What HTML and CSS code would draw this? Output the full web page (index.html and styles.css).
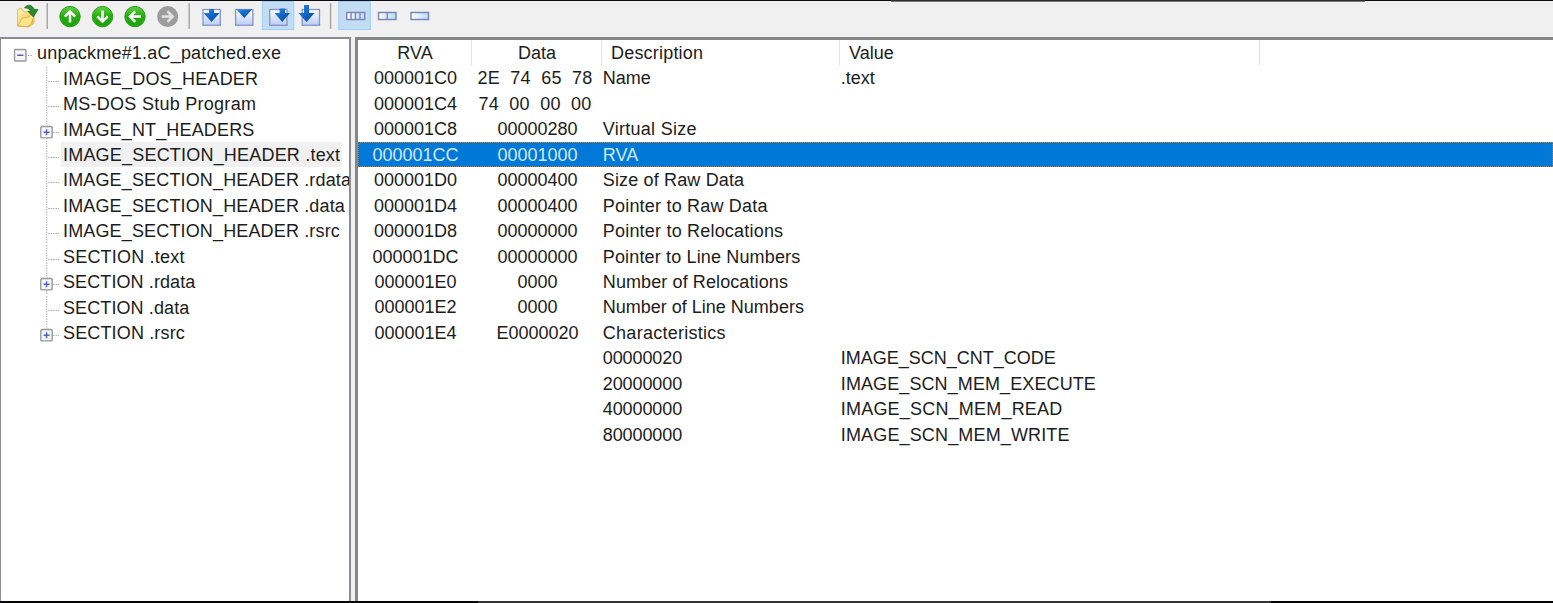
FILE: index.html
```html
<!DOCTYPE html>
<html lang="en">
<head>
<meta charset="utf-8">
<title>unpackme#1.aC_patched.exe</title>
<link rel="stylesheet" href="styles.css">
</head>
<body>
<svg class="defs" aria-hidden="true">
  <defs>
    <linearGradient id="green" x1="0" y1="0" x2="0" y2="1"><stop offset="0" stop-color="#63cf43"/><stop offset=".5" stop-color="#25ab10"/><stop offset="1" stop-color="#1fa20c"/></linearGradient>
    <linearGradient id="pane" x1="0" y1="0" x2="0" y2="1"><stop offset="0" stop-color="#fff"/><stop offset="1" stop-color="#b9ccf5"/></linearGradient>
    <linearGradient id="glass" x1="0" y1="0" x2="1" y2="0"><stop offset="0" stop-color="#fff"/><stop offset="1" stop-color="#b5dcf8"/></linearGradient>
    <linearGradient id="blue" x1="0" y1="0" x2="1" y2="1"><stop offset="0" stop-color="#278be9"/><stop offset="1" stop-color="#003f9f"/></linearGradient>
    <linearGradient id="folder" x1="0" y1="0" x2="1" y2="1"><stop offset="0" stop-color="#fff5b3"/><stop offset="1" stop-color="#f3b83c"/></linearGradient>
    <symbol id="leaf" viewBox="0 0 62 25.45"><path class="dots" d="M47.5 0V25.45M49 14.5H60"/></symbol>
    <symbol id="plus" viewBox="0 0 62 25.45"><path class="dots" d="M47.5 0V25.45M54 14.5H60"/><rect class="box" x="41.5" y="8.5" width="11.5" height="11.5" rx="1"/><path class="mark" d="M44.3 14.3H50.3M47.3 11.3V17.3"/></symbol>
    <symbol id="plus-end" viewBox="0 0 62 25.45"><path class="dots" d="M47.5 0V9M54 14.5H60"/><rect class="box" x="41.5" y="8.5" width="11.5" height="11.5" rx="1"/><path class="mark" d="M44.3 14.3H50.3M47.3 11.3V17.3"/></symbol>
    <symbol id="minus" viewBox="0 0 35 25.45"><path class="dots" d="M28 14.5H33"/><rect class="box" x="14.5" y="8.5" width="11.5" height="11.5" rx="1"/><path class="mark" d="M17.2 14.2H23.4"/></symbol>
  </defs>
</svg>
<div class="window">
  <div class="edge-top"><span class="edge-mid"></span></div>
  <div class="toolbar">
    <svg class="toolbar-art" width="440" height="36" viewBox="0 1 440 36">
      <path d="M17.5 10L21 8L24 12L31 11L34 16L34 23L29 27L17.5 26Z" fill="url(#folder)" stroke="#e6b24a" stroke-width=".8"/>
      <path d="M18 26L22 18L29 17L31 14L34.5 14.5L31.5 23L28 26.5Z" fill="#ffe58c" stroke="#e2a531" stroke-width=".8"/>
      <path d="M24.5 8C27 4 32 4 34.3 9.5H38L33.3 17L28 11.5L30.5 11C29.5 8.5 27 8 24.5 8Z" fill="#2b8a2b" stroke="#17651d" stroke-width=".7"/>
      <g fill="#a7a7a7"><rect x="46.5" y="3" width="1.5" height="26"/><rect x="188.4" y="3" width="1.5" height="26"/><rect x="329.8" y="3" width="1.5" height="26"/></g>
      <g stroke="#249c14" stroke-width="1" fill="url(#green)"><circle cx="70" cy="16.6" r="10.2"/><circle cx="102.5" cy="16.6" r="10.2"/><circle cx="135" cy="16.6" r="10.2"/></g>
      <circle cx="167.7" cy="16.6" r="10.5" fill="#9c9c9c"/>
      <g fill="none" stroke="#fff" stroke-width="2.5">
        <path d="M70 22.5V12M64.8 16.6L70 11.4L75.2 16.6"/>
        <path d="M102.5 10.5V21M97.3 16.4L102.5 21.6L107.7 16.4"/>
        <path d="M141 16.6H130.5M135.2 11.4L130 16.6L135.2 21.8"/>
        <path d="M161.8 16.6H172.2M167.5 11.4L172.7 16.6L167.5 21.8" stroke="#e4e4e4"/>
      </g>
      <g fill="#c2dcf3" stroke="#99d1fb"><rect x="262.3" y="1.5" width="31.5" height="28"/><rect x="338.8" y="1.5" width="31.5" height="28"/></g>
      <g fill="url(#pane)" stroke="#8792c7" stroke-width="1.3"><rect x="203" y="9.5" width="17.3" height="15.8"/><rect x="235.6" y="9.5" width="17.3" height="15.8"/><rect x="269.7" y="9.5" width="17.3" height="15.8"/><rect x="302.2" y="9.5" width="17.3" height="15.8"/></g>
      <g fill="url(#blue)">
        <path d="M209 9H214V13H219.5L211.5 22L203.5 13H209Z"/>
        <path d="M236.5 9.5H252L244.2 18Z"/>
        <path d="M279.5 8.5H285V13H290L282.2 22L274.5 13H279.5Z"/>
        <path d="M304 5H309V13H314.5L306.5 22L298.5 13H304Z"/>
      </g>
      <g fill="url(#glass)" stroke="#8086bb" stroke-width="1.5"><rect x="346.7" y="12.5" width="18" height="7"/><path d="M351 12.5V19.5M355.5 12.5V19.5M360 12.5V19.5"/><rect x="378.5" y="12.5" width="17.5" height="7"/><path d="M387.2 12.5V19.5"/><rect x="411" y="12.5" width="17.5" height="7"/></g>
    </svg>
  </div>
  <div class="panes">
    <ul class="tree">
      <li class="node"><svg class="twig root"><use href="#minus"/></svg><span class="label s20">unpackme#1.aC_patched.exe</span></li>
      <li class="node"><svg class="twig"><use href="#leaf"/></svg><span class="label s20">IMAGE_DOS_HEADER</span></li>
      <li class="node"><svg class="twig"><use href="#leaf"/></svg><span class="label s25">MS-DOS Stub Program</span></li>
      <li class="node"><svg class="twig"><use href="#plus"/></svg><span class="label s15">IMAGE_NT_HEADERS</span></li>
      <li class="node"><svg class="twig"><use href="#leaf"/></svg><span class="label s20 selected">IMAGE_SECTION_HEADER .text</span></li>
      <li class="node"><svg class="twig"><use href="#leaf"/></svg><span class="label s15">IMAGE_SECTION_HEADER .rdata</span></li>
      <li class="node"><svg class="twig"><use href="#leaf"/></svg><span class="label s15">IMAGE_SECTION_HEADER .data</span></li>
      <li class="node"><svg class="twig"><use href="#leaf"/></svg><span class="label s15">IMAGE_SECTION_HEADER .rsrc</span></li>
      <li class="node"><svg class="twig"><use href="#leaf"/></svg><span class="label s20">SECTION .text</span></li>
      <li class="node"><svg class="twig"><use href="#plus"/></svg><span class="label s10">SECTION .rdata</span></li>
      <li class="node"><svg class="twig"><use href="#leaf"/></svg><span class="label s10">SECTION .data</span></li>
      <li class="node"><svg class="twig"><use href="#plus-end"/></svg><span class="label s15">SECTION .rsrc</span></li>
    </ul>
    <div class="list">
      <div class="row head"><span class="num">RVA</span><span class="num">Data</span><span class="s20">Description</span><span>Value</span></div>
      <div class="row"><span class="num">000001C0</span><span class="num bytes">2E  74  65  78</span><span>Name</span><span>.text</span></div>
      <div class="row"><span class="num">000001C4</span><span class="num bytes">74  00  00  00</span></div>
      <div class="row"><span class="num">000001C8</span><span class="num">00000280</span><span class="s25">Virtual Size</span></div>
      <div class="row active"><span class="num">000001CC</span><span class="num">00001000</span><span>RVA</span></div>
      <div class="row"><span class="num">000001D0</span><span class="num">00000400</span><span class="s15">Size of Raw Data</span></div>
      <div class="row"><span class="num">000001D4</span><span class="num">00000400</span><span class="s20">Pointer to Raw Data</span></div>
      <div class="row"><span class="num">000001D8</span><span class="num">00000000</span><span class="s20">Pointer to Relocations</span></div>
      <div class="row"><span class="num">000001DC</span><span class="num">00000000</span><span class="s15">Pointer to Line Numbers</span></div>
      <div class="row"><span class="num">000001E0</span><span class="num">0000</span><span class="s10">Number of Relocations</span></div>
      <div class="row"><span class="num">000001E2</span><span class="num">0000</span><span>Number of Line Numbers</span></div>
      <div class="row"><span class="num">000001E4</span><span class="num">E0000020</span><span class="s25">Characteristics</span></div>
      <div class="row"><span></span><span></span><span class="tight">00000020</span><span>IMAGE_SCN_CNT_CODE</span></div>
      <div class="row"><span></span><span></span><span class="tight">20000000</span><span class="s10">IMAGE_SCN_MEM_EXECUTE</span></div>
      <div class="row"><span></span><span></span><span class="tight">40000000</span><span class="s20">IMAGE_SCN_MEM_READ</span></div>
      <div class="row"><span></span><span></span><span class="tight">80000000</span><span class="s15">IMAGE_SCN_MEM_WRITE</span></div>
    </div>
  </div>
  <div class="edge-bottom"></div>
</div>
</body>
</html>
```
FILE: styles.css
```css
* { box-sizing: border-box; }
body {
  margin: 0;
  overflow: hidden;
  background: #f0f0f0;
  color: #1c1c1c;
  font: 18px/25.45px "Liberation Sans", Arial, sans-serif;
}
.defs { position: absolute; width: 0; height: 0; }
.window { display: flex; flex-direction: column; width: 1553px; height: 603px; }
.edge-top { flex: none; height: 1px; padding-left: 891px; background: #0b0b10; position: relative; }
.edge-mid { display: block; width: 474px; height: 2px; background: linear-gradient(#2c2c2c 50%, #777 50%); }
.toolbar { flex: none; height: 36px; }
.toolbar-art { display: block; }
.panes { flex: 1; display: flex; gap: 4px; min-height: 0; }
.tree {
  width: 351px;
  margin: 0;
  padding: 2.3px 0 0;
  list-style: none;
  overflow: hidden;
  background: #fff;
  border: solid #898d97;
  border-width: 2px 2px 0 1px;
}
.node { display: flex; height: 25.45px; margin-left: -1px; white-space: nowrap; }
.twig { flex: none; width: 61px; height: 25.45px; }
.root { width: 35px; }
.twig use { width: 62px; height: 25.45px; }
.root use { width: 35px; }
.dots { fill: none; stroke: #999; stroke-width: 1; stroke-dasharray: 1.27 1.27; }
.box { fill: #f5f5f5; stroke: #989898; stroke-width: 1.4; }
.mark { fill: none; stroke: #4b66b8; stroke-width: 1.5; }
.label { height: 25.45px; margin-top: -1px; padding: 0 2px 0 2px; line-height: 27.45px; }
.s10 { letter-spacing: .1px; }
.s15 { letter-spacing: .15px; }
.s20 { letter-spacing: .2px; }
.s25 { letter-spacing: .27px; }
.tight { letter-spacing: -.1px; }
.selected { background: #f0f0f0; }
.list {
  flex: 1;
  min-width: 0;
  background: #fff;
  border: solid #858585;
  border-width: 3px 0 0 3px;
  overflow: hidden;
}
.row {
  display: grid;
  grid-template-columns: 114px 130px 238px 420px 1fr;
  height: 25.45px;
  line-height: 27px;
  white-space: pre;
}
.row > span { height: 25.45px; padding-left: .8px; }
.row > .num { padding-left: 1px; text-align: center; }
.row > .bytes { padding-right: 5px; letter-spacing: .2px; }
.head > span { border-right: 1px solid #e2e2e2; }
.head > span:nth-child(n+3) { padding-left: 9px; }
.active { background: #0078d7; color: #d4e8fa; outline: 1px dotted #8f8577; outline-offset: -1px; }
.edge-bottom {
  flex: none;
  height: 2px;
  background: linear-gradient(90deg, #050505 478px, #333 478px 1271px, #050505 1271px);
}
```
